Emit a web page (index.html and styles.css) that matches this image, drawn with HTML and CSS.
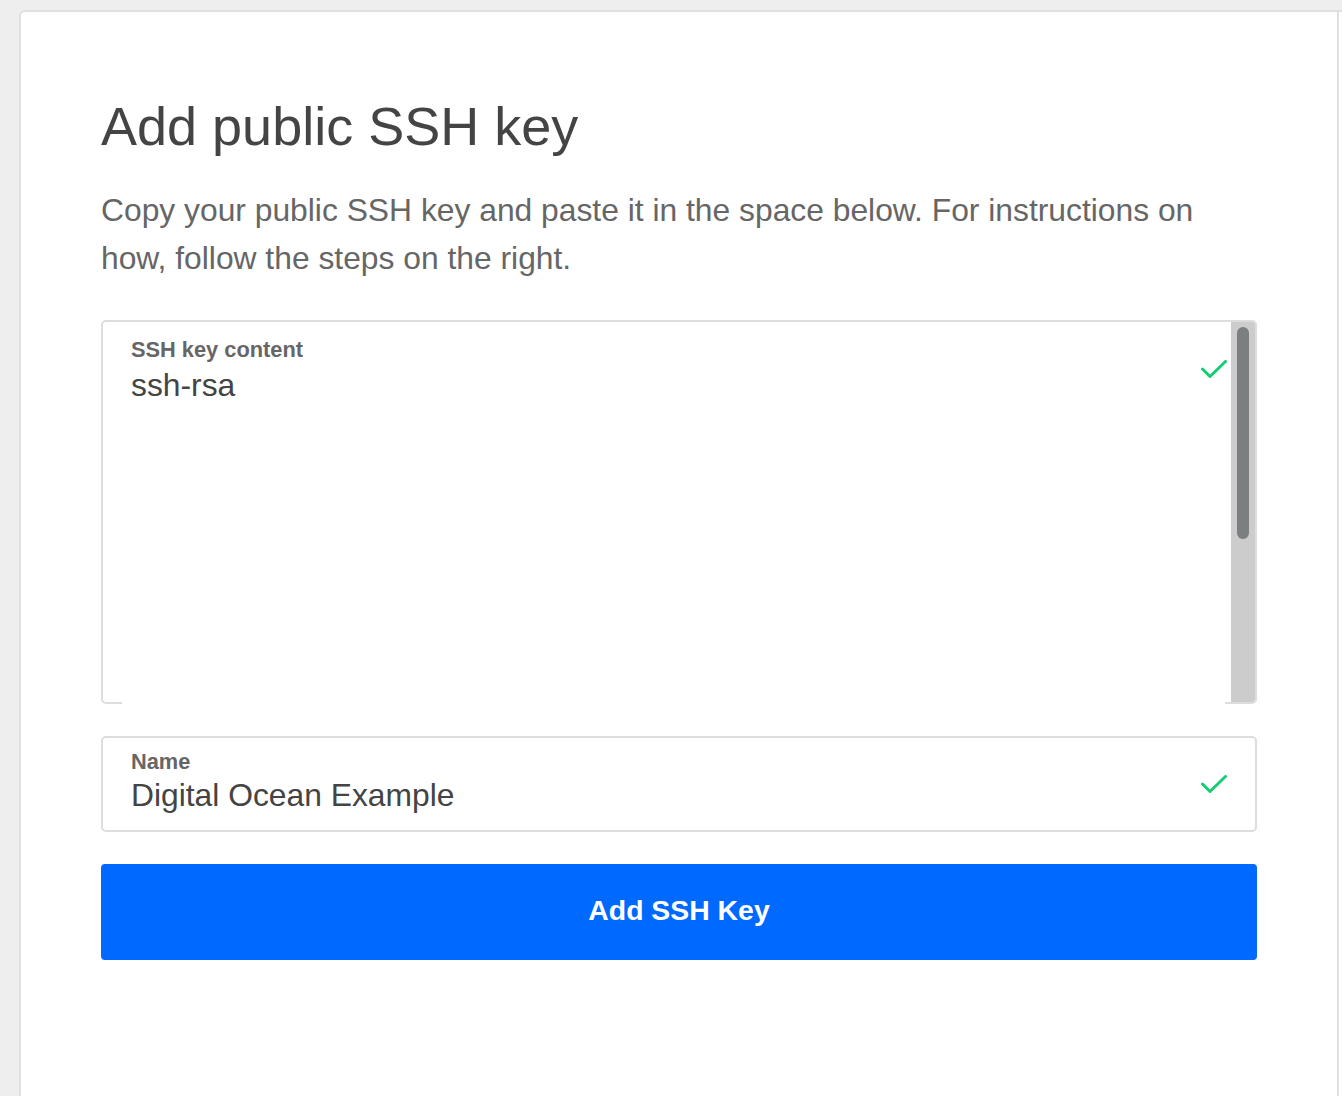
FILE: index.html
```html
<!DOCTYPE html>
<html lang="en">
<head>
<meta charset="utf-8">
<title>Add public SSH key</title>
<link rel="stylesheet" href="styles.css">
</head>
<body>
<div class="card">
  <div class="main">
    <h1 class="title">Add public SSH key</h1>
    <p class="lead">Copy your public SSH key and paste it in the space below. For instructions on how, follow the steps on the right.</p>

    <div class="field field-area">
      <div class="field-body">
        <div class="field-label">SSH key content</div>
        <div class="field-value">ssh-rsa</div>
      </div>
      <svg class="check check-area" width="26" height="18" viewBox="0 0 26 18"><polyline points="1.5,9 9,16.5 24.5,1.5" fill="none" stroke="#15cd72" stroke-width="3" stroke-linecap="round" stroke-linejoin="round"/></svg>
      <div class="scroll-track"><div class="scroll-thumb"></div></div>
    </div>

    <div class="field field-name">
      <div class="field-body">
        <div class="field-label">Name</div>
        <div class="field-value">Digital Ocean Example</div>
      </div>
      <svg class="check" width="26" height="18" viewBox="0 0 26 18"><polyline points="1.5,9 9,16.5 24.5,1.5" fill="none" stroke="#15cd72" stroke-width="3" stroke-linecap="round" stroke-linejoin="round"/></svg>
    </div>

    <button class="submit" type="button">Add SSH Key</button>
  </div>
  <div class="side"></div>
</div>
</body>
</html>
```

FILE: styles.css
```css
html, body {
  margin: 0;
  padding: 0;
}

body {
  background: #eeeeee;
  font-family: "Liberation Sans", Arial, Helvetica, sans-serif;
  overflow: hidden;
  height: 1096px;
}

.card {
  display: flex;
  box-sizing: border-box;
  margin: 10px 0 0 19px;
  width: 1323px;
  height: 1086px;
  background: #ffffff;
  border-top: 2px solid #e0e0e0;
  border-left: 2px solid #e0e0e0;
  border-top-left-radius: 6px;
}

.main {
  width: 1156px;
  padding: 82px 80px 0 80px;
  border-right: 2px solid #e0e0e0;
  flex: none;
}

.side {
  flex: 1;
}

.title {
  margin: 0;
  font-size: 54px;
  line-height: 64px;
  font-weight: 400;
  color: #444444;
}

.lead {
  margin: 28px 0 0 0;
  font-size: 31.8px;
  line-height: 48px;
  color: #666666;
}

.field {
  position: relative;
  display: flex;
  box-sizing: border-box;
  border: 2px solid #dddddd;
  border-radius: 5px;
  background: #ffffff;
}

.field-area {
  margin-top: 38px;
  height: 384px;
  align-items: flex-start;
}

.field-area::after {
  content: "";
  position: absolute;
  left: 19px;
  right: 30px;
  bottom: -2px;
  height: 2px;
  background: #ffffff;
}

.field-name {
  margin-top: 32px;
  height: 96px;
  align-items: center;
}

.field-body {
  flex: 1;
  padding-left: 28px;
}

.field-area .field-body {
  padding-top: 15px;
}

.field-name .field-body {
  padding-top: 11px;
  align-self: flex-start;
}

.field-label {
  font-size: 21.8px;
  line-height: 26px;
  font-weight: 700;
  color: #666666;
}

.field-value {
  margin-top: 4px;
  font-size: 31.8px;
  line-height: 36px;
  color: #444444;
}

.field-name .field-value {
  margin-top: 2px;
}

.check {
  flex: none;
  margin-right: 28px;
}

.check-area {
  margin-top: 38px;
  margin-right: 4px;
}

.scroll-track {
  flex: none;
  align-self: stretch;
  width: 24px;
  background: #cccccc;
  border-top-right-radius: 3px;
  border-bottom-right-radius: 3px;
  padding-top: 5px;
  box-sizing: border-box;
}

.scroll-thumb {
  margin-left: 6px;
  width: 12px;
  height: 212px;
  border-radius: 6px;
  background: #7b7f80;
}

.submit {
  display: block;
  width: 100%;
  height: 96px;
  margin-top: 32px;
  padding: 0 0 4px 0;
  border: none;
  border-radius: 4px;
  background: #0069ff;
  color: #ffffff;
  font-family: "Liberation Sans", Arial, Helvetica, sans-serif;
  font-size: 28.4px;
  font-weight: 700;
  cursor: pointer;
}
```
